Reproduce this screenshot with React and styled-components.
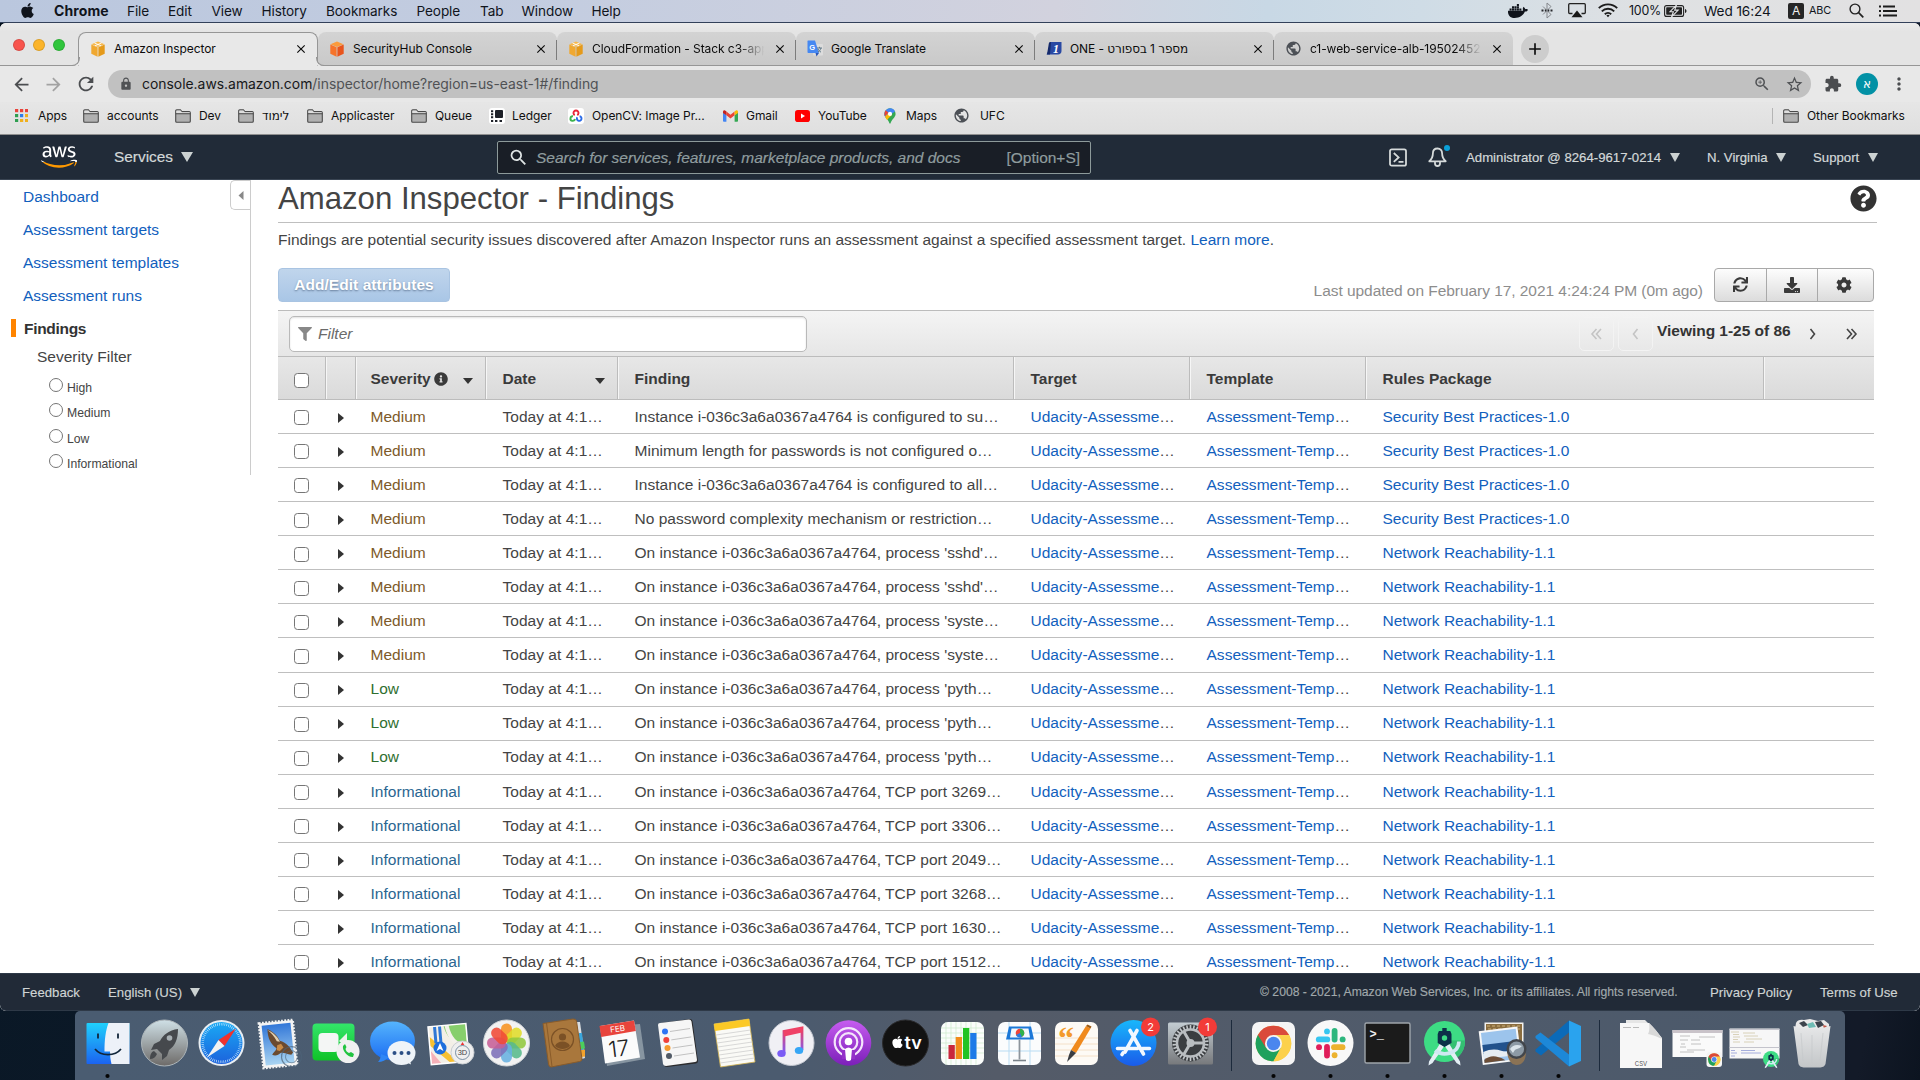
import React from "react";
import styled, { createGlobalStyle, css } from "styled-components";
import { FaApple, FaDocker, FaAws, FaSync, FaDownload, FaCog, FaQuestionCircle, FaInfoCircle, FaFilter } from "react-icons/fa";
import {
  MdLock, MdExtension, MdStarBorder, MdZoomIn, MdArrowBack, MdArrowForward, MdRefresh,
  MdMoreVert, MdPublic, MdClose, MdAdd, MdSearch,
} from "react-icons/md";

const GlobalStyle = createGlobalStyle`
  * { box-sizing: border-box; }
  html, body { margin: 0; padding: 0; overflow: hidden; }
  svg { display: block; flex: none; }
`;

const ui = `Inter, "DejaVu Sans", sans-serif`;
const helv = `"Liberation Sans", Arial, sans-serif`;

const Desktop = styled.div`
  width: 1920px;
  height: 1080px;
  overflow: hidden;
  display: flex;
  flex-direction: column;
  background: linear-gradient(100deg, #04101c 0%, #0a1826 6%, #101c2c 50%, #131a28 97%, #0c1420 100%);
  font-family: ${helv};
  color: #444;
`;

/* ---------- shared ---------- */
const Slot = styled.div`
  flex: 0 0 ${(p) => p.$w}px;
  display: flex;
  align-items: center;
  white-space: nowrap;
`;
const Spacer = styled.div`
  flex: 1;
`;
const Caret = styled.span`
  flex: none;
  width: 0;
  height: 0;
  margin-left: ${(p) => p.$gap || 8}px;
  border-left: ${(p) => p.$s || 5}px solid transparent;
  border-right: ${(p) => p.$s || 5}px solid transparent;
  border-top: ${(p) => p.$h || 9}px solid ${(p) => p.$c || "#ccd2d2"};
`;

/* ---------- mac menu bar ---------- */
const MenuBar = styled.div`
  flex: 0 0 23px;
  display: flex;
  align-items: center;
  padding: 0 23px 1px 19px;
  border-bottom: 1px solid #33415a;
  background: linear-gradient(90deg, #bac7de 0%, #c4cde0 30%, #d2d2de 55%, #c8d8e5 66%, #cfdce6 74%, #dfe1e3 86%, #e2e1e2 100%);
  font: 400 13.6px ${ui};
  letter-spacing: -0.1px;
  color: #10141c;
`;
const AppName = styled.span`
  font-size: 14px;
  font-weight: 700;
  letter-spacing: 0.1px;
`;
const Small = styled.span`
  font-size: 12.4px;
  letter-spacing: -0.2px;
`;
const Tiny = styled.span`
  font-size: 10.8px;
`;
const InputBadge = styled.span`
  width: 16px;
  height: 16px;
  border-radius: 2px;
  background: #262626;
  color: #eee;
  font-size: 12px;
  line-height: 16px;
  text-align: center;
`;

/* ---------- browser ---------- */
const Browser = styled.div`
  flex: 0 0 988px;
  display: flex;
  flex-direction: column;
  border-radius: 6px;
  overflow: hidden;
  background: #fff;
`;
const TabStrip = styled.div`
  flex: 0 0 43px;
  display: flex;
  align-items: flex-end;
  background: linear-gradient(#ececec, #e4e4e4 20%);
  border-bottom: 1px solid #969696;
  font: 400 12px ${ui};
  letter-spacing: -0.08px;
  color: #0c0c0c;
`;
const Lights = styled.div`
  flex: 0 0 78px;
  align-self: center;
  display: flex;
  gap: 8px;
  padding: 2px 0 0 13px;
`;
const Light = styled.span`
  width: 12px;
  height: 12px;
  border-radius: 50%;
  background: ${(p) => p.$c};
  border: 1px solid rgba(0, 0, 0, 0.12);
`;
const Tab = styled.div`
  position: relative;
  flex: 0 0 239px;
  min-width: 0;
  height: 33px;
  display: flex;
  align-items: center;
  padding: 0 9px 0 11px;
  border-radius: 8px 8px 0 0;
  background: linear-gradient(#d3d3d3, #c9c9c9);
  ${(p) =>
    p.$active &&
    css`
      flex-basis: 240px;
      height: 34px;
      margin-bottom: -1px;
      background: #e8e8e8;
      border: 1px solid #969696;
      border-bottom: 0;
      padding: 0 9px 2px 11px;
      z-index: 1;
      &::before,
      &::after {
        content: "";
        position: absolute;
        bottom: 0;
        width: 8px;
        height: 8px;
        border-bottom: 1px solid #969696;
      }
      &::before {
        left: -8px;
        border-right: 1px solid #969696;
        border-bottom-right-radius: 8px;
        box-shadow: 2px 1px 0 #e8e8e8;
      }
      &::after {
        right: -8px;
        border-left: 1px solid #969696;
        border-bottom-left-radius: 8px;
        box-shadow: -2px 1px 0 #e8e8e8;
      }
    `}
`;
const TabRule = styled.span`
  position: absolute;
  right: 0;
  top: 8px;
  width: 1px;
  height: 20px;
  background: #7c7c7c;
`;
const TabTitle = styled.span`
  flex: 1 1 0;
  min-width: 0;
  margin: 0 5px 0 8px;
  overflow: hidden;
  white-space: nowrap;
  ${(p) => p.$fade && css`mask-image: linear-gradient(90deg, #000 83%, transparent 98%);`}
`;
const NewTab = styled.div`
  width: 28px;
  height: 28px;
  margin: 0 0 2px 8px;
  border-radius: 50%;
  background: #cdcdcd;
  display: flex;
  align-items: center;
  justify-content: center;
`;
const Toolbar = styled.div`
  flex: 0 0 36px;
  display: flex;
  align-items: center;
  padding: 0 10px 0 11px;
  background: #e8e8e8;
  color: #4b4d50;
`;
const Omnibox = styled.div`
  flex: 0 0 1703px;
  height: 28px;
  border-radius: 14px;
  background: #c1c1c1;
  display: flex;
  align-items: center;
  padding: 0 7px 0 11px;
  font: 400 13.9px ${ui};
  letter-spacing: 0;
  color: #505255;
`;
const Host = styled.span`
  color: #17181a;
`;
const Url = styled.span`
  margin-left: 9px;
  white-space: nowrap;
`;
const Avatar = styled.span`
  width: 22px;
  height: 22px;
  border-radius: 50%;
  background: #0291a5;
  color: #fff;
  font: 12px/22px "DejaVu Sans", sans-serif;
  text-align: center;
`;
const Bookmarks = styled.div`
  flex: 0 0 33px;
  display: flex;
  align-items: center;
  padding: 0 0 5px 15px;
  background: linear-gradient(#e6e6e6, #dfdfdf);
  border-bottom: 1px solid #8f8f8f;
  font: 400 12px ${ui};
  letter-spacing: -0.06px;
  color: #101010;
`;
const BmIcon = styled.span`
  flex: 0 0 ${(p) => p.$w}px;
  display: flex;
`;
const BmRule = styled.span`
  width: 1px;
  height: 16px;
  margin-right: 10px;
  background: #b4b4b4;
`;

/* ---------- aws nav ---------- */
const Nav = styled.div`
  flex: 0 0 45px;
  display: flex;
  align-items: center;
  padding-left: 41px;
  background: #212b38;
  border-bottom: 1px solid #3a4553;
  color: #d3d8d8;
  font-size: 13.2px;
  -webkit-text-stroke: 0.2px;
`;
const Services = styled.div`
  flex: 0 0 383px;
  display: flex;
  align-items: center;
  font-size: 15.4px;
`;
const NavSearch = styled.div`
  flex: 0 0 594px;
  height: 33px;
  display: flex;
  align-items: center;
  padding: 1px 10px 0 10px;
  border: 1px solid #8d9a9a;
  border-radius: 2px;
  background: #191e26;
  color: #8f9c9e;
  font-size: 15.5px;
  letter-spacing: -0.02px;
  i { flex: 1; margin-left: 7px; }
`;
const BellWrap = styled.span`
  position: relative;
`;
const Dot = styled.span`
  position: absolute;
  right: -3px;
  top: -2px;
  width: 6px;
  height: 6px;
  border-radius: 50%;
  background: #0aa0d8;
`;

/* ---------- page ---------- */
const Page = styled.div`
  flex: 1;
  min-height: 0;
  display: flex;
  overflow: hidden;
  font-size: 15.5px;
`;
const Side = styled.div`
  flex: 0 0 251px;
  height: 295px;
  display: flex;
  border-right: 1px solid #ccc;
`;
const SideNav = styled.div`
  flex: 1;
  display: flex;
  flex-direction: column;
  padding-left: 11px;
  > * { flex: none; }
`;
const SideLink = styled.a`
  height: 33px;
  line-height: 33px;
  padding-left: 12px;
  color: #1160bd;
`;
const SideCurrent = styled.div`
  height: 18px;
  line-height: 19px;
  margin-top: 7px;
  padding-left: 8px;
  border-left: 5px solid #ff8400;
  font-weight: 700;
  letter-spacing: -0.3px;
  color: #333;
`;
const SideSub = styled.div`
  height: 35px;
  line-height: 40px;
  padding-left: 26px;
`;
const Choice = styled.div`
  height: 25.5px;
  display: flex;
  align-items: center;
  padding-left: 38px;
  font-size: 12.2px;
  span { margin: 6px 0 0 4px; }
`;
const Radio = styled.i`
  width: 14px;
  height: 14px;
  border: 1px solid #757575;
  border-radius: 50%;
`;
const Collapse = styled.div`
  width: 20px;
  height: 30px;
  border: 1px solid #ccc;
  border-right: 0;
  border-radius: 5px 0 0 5px;
  display: flex;
  align-items: center;
  justify-content: center;
`;
const Main = styled.div`
  flex: 0 0 1599px;
  margin-left: 27px;
  display: flex;
  flex-direction: column;
  > * { flex-shrink: 0; }
`;
const TitleRow = styled.div`
  height: 43px;
  display: flex;
  justify-content: space-between;
  align-items: flex-start;
  border-bottom: 1px solid #bfbfbf;
  color: #333;
`;
const Title = styled.h1`
  margin: 0;
  font-weight: 400;
  font-size: 31.15px;
  line-height: 37px;
  color: #444;
`;
const Desc = styled.div`
  height: 45px;
  line-height: 34px;
  a { color: #1160bd; }
`;
const Actions = styled.div`
  width: 1596px;
  height: 33px;
  display: flex;
  align-items: center;
`;
const Primary = styled.div`
  width: 172px;
  height: 34px;
  line-height: 31px;
  text-align: center;
  border: 1px solid #a9c4e2;
  border-radius: 4px;
  background: linear-gradient(#c0d5ec, #a9c6e6);
  color: #fff;
  font-weight: 700;
  letter-spacing: 0.05px;
  text-shadow: 0 1px 2px rgba(40, 60, 90, 0.55);
`;
const Updated = styled.div`
  margin: 12px 11px 0 auto;
  letter-spacing: -0.05px;
  color: #8d8d8d;
`;
const Group = styled.div`
  display: flex;
  width: 160px;
  height: 34px;
  border: 1px solid #a9a9a9;
  border-radius: 4px;
  background: linear-gradient(#fdfdfd, #dcdcdc);
  color: #3a3a3a;
`;
const GroupBtn = styled.div`
  flex: 0 0 ${(p) => p.$w}px;
  display: flex;
  align-items: center;
  justify-content: center;
  & + & { border-left: 1px solid #a9a9a9; }
  &:last-child { padding-right: 3px; }
`;
const FilterBar = styled.div`
  width: 1596px;
  height: 47px;
  margin-top: 9px;
  padding: 0 1px 0 11px;
  display: flex;
  align-items: center;
  border-top: 1px solid #bcbcbc;
  border-bottom: 1px solid #bcbcbc;
  background: linear-gradient(#f4f4f4, #e6e6e6);
`;
const FilterBox = styled.div`
  width: 518px;
  height: 36px;
  display: flex;
  align-items: center;
  gap: 6px;
  padding-left: 8px;
  border: 1px solid #b9b9b9;
  border-radius: 5px;
  background: #fff;
  box-shadow: inset 0 1px 2px rgba(0, 0, 0, 0.12);
  color: #6a6a6a;
`;
const Pager = styled.div`
  width: 35px;
  height: 34px;
  margin-right: 4px;
  border: 1px solid ${(p) => (p.$off ? "#f3f3f3" : "transparent")};
  border-radius: 5px;
  display: flex;
  align-items: center;
  justify-content: center;
  color: ${(p) => (p.$off ? "#c4c4c4" : "#444")};
`;
const Viewing = styled.b`
  width: 138px;
  margin-bottom: 5px;
  letter-spacing: -0.03px;
  color: #333;
  white-space: nowrap;
`;
const grid = css`
  display: grid;
  width: 1596px;
  grid-template-columns: 48px 28px 132px 132px 396px 176px 176px 398px 110px;
`;
const Head = styled.div`
  ${grid}
  height: 43px;
  border-bottom: 1px solid #bcbcbc;
  background: linear-gradient(#e7e7e7, #dadada);
  font-weight: 700;
  letter-spacing: -0.02px;
  color: #3a3a3a;
`;
const HeadCell = styled.div`
  display: flex;
  align-items: center;
  padding: 2px 12px 0 16.5px;
  border-right: 1px solid ${(p) => (p.$last ? "transparent" : "#bcbcbc")};
  box-shadow: ${(p) => (p.$last ? "none" : "1px 0 0 #f6f6f6")};
  svg { margin: -1px 0 0 3px; }
`;
const Sort = styled.span`
  margin: 3px 0 0 auto;
  border-left: 5.5px solid transparent;
  border-right: 5.5px solid transparent;
  border-top: 6px solid #333;
`;
const Row = styled.div`
  ${grid}
  flex: 0 0 34.07px;
  border-bottom: 1px solid #bfbfbf;
  letter-spacing: 0.03px;
`;
const Cell = styled.div`
  display: flex;
  align-items: center;
  padding: 0.6px 0 0 16.5px;
  white-space: nowrap;
  color: ${(p) => p.$c || "#444"};
`;
const Link = styled.a`
  color: #1160bd;
`;
const Check = styled.i`
  width: 15px;
  height: 15px;
  margin: 2px 0 0 -0.5px;
  border: 1px solid #767676;
  border-radius: 3.5px;
  background: #fff;
`;
const Expand = styled.i`
  margin: 2px 0 0 -4.5px;
  border-top: 5px solid transparent;
  border-bottom: 5px solid transparent;
  border-left: 6px solid #333;
`;
const Foot = styled.div`
  flex: 0 0 38px;
  display: flex;
  align-items: center;
  padding: 0 0 0 22px;
  background: #212a37;
  border: 1px solid #2e3947;
  border-width: 1px 0;
  border-radius: 0 0 6px 6px;
  color: #cfd4d4;
  font-size: 13.2px;
  -webkit-text-stroke: 0.15px;
`;
const Legal = styled.span`
  font-size: 12.2px;
  color: #a0a8ab;
`;

/* ---------- dock ---------- */
const DockWrap = styled.div`
  flex: 0 0 69px;
  padding-left: 75px;
`;
const Dock = styled.div`
  width: 1770px;
  height: 69px;
  padding-left: 3.5px;
  display: flex;
  border-radius: 5px 5px 0 0;
  background: linear-gradient(90deg, #4a5c71 0%, #4b5b6f 40%, #545b68 52%, #505b6b 75%, #4b596b 100%);
`;
const DockCell = styled.div`
  flex: 0 0 57.05px;
  height: 69px;
`;
const DockRule = styled.div`
  flex: 0 0 25.3px;
  padding: 9px 0 0 12px;
  &::after { content: ""; display: block; width: 1px; height: 51px; background: #1c2a3c; }
`;

/* ---------- icons ---------- */
const Folder = () => (
  <svg width="16" height="14" viewBox="0 0 16 14" fill="#b0b0b0" stroke="#4a4a4a" strokeWidth="1.1">
    <path d="M.7 12.2V2c0-.7.4-1.1 1-1.1h3.700l1.500 1.700h7.300c.700 0 1.100.4 1.100 1.100v8.500c0 .7-.4 1-1.100 1H1.700c-.6 0-1-.3-1-1z" />
    <path d="M1.300 2v2.200h13.400V3.200H7L5.400 1.500H1.700z" fill="#dedede" stroke="none" />
    <path d="M.7 4.700h14.600" />
  </svg>
);
const Cube = ({ l, r, t, band }) => (
  <svg width="16" height="16" viewBox="0 0 16 16">
    <path d="M8 .5l6.500 2.700L8 6 1.500 3.200z" fill={t} />
    <path d="M1.300 3.600L7.600 6.200v9.500l-6.300-2.900z" fill={l} />
    <path d="M14.700 3.600L8.400 6.200v9.500l6.300-2.900z" fill={r} />
    {band && <path d="M4.500 2l6.600 2.800M11.500 2L4.900 4.800" stroke="#fff" strokeWidth=".9" />}
  </svg>
);
const TranslateIcon = () => (
  <svg width="16" height="17" viewBox="0 0 16 17">
    <rect x="6" y="4" width="10" height="11.500" rx="1" fill="#dcdcdc" />
    <path d="M1 .5h7l4 12.500H1.600c-.6 0-1.100-.4-1.100-1V1.500C.5.900.7.5 1 .5z" fill="#4688f1" />
    <path d="M8.500 13h3.500l-2.500 3.500z" fill="#2b57b8" />
    <path d="M10 8h5M12.500 6.800V8M14 8c-.6 2-1.500 3-3 4M11 9c.6 1.400 1.600 2.400 3 3.200" stroke="#607988" fill="none" />
    <text x="2.200" y="9.500" fontSize="7.500" fontWeight="700" fontFamily="Liberation Sans" fill="#fff">G</text>
  </svg>
);
const OneIcon = () => (
  <svg width="16" height="15" viewBox="0 0 16 15">
    <path d="M4 1h11.500v9c0 2-1.500 3.500-3.500 3.500H.5l2-4z" fill="#2949a3" />
    <path d="M1 13.500l2-12 2-.5-1 12.500z" fill="#152a6b" />
    <text x="7" y="12" fontSize="12" fontStyle="italic" fontWeight="700" fontFamily="Liberation Serif" fill="#fff">1</text>
  </svg>
);
const AppsIcon = () => (
  <svg width="13" height="13" viewBox="0 0 13 13">
    {["#e8433a", "#e8433a", "#e8433a", "#2e9e50", "#2f7de9", "#f0b01e", "#2e9e50", "#f0b01e", "#f0b01e"].map((c, i) => (
      <rect key={i} x={(i % 3) * 5} y={Math.floor(i / 3) * 5} width="3.200" height="3.200" fill={c} />
    ))}
  </svg>
);
const LedgerIcon = () => (
  <svg width="16" height="16" viewBox="0 0 16 16">
    <rect width="16" height="16" rx="3" fill="#fff" />
    <rect x="6" y="2" width="8" height="8" rx="1" fill="#1d2028" />
    <path d="M2 3.200h2.200M2 6.300h2.200M2 9.300h2.200" stroke="#1d2028" strokeWidth="1.900" />
    <path d="M2 13h2.200M6 13h2.400M10.500 13H13" stroke="#1d2028" strokeWidth="2" />
  </svg>
);
const CvIcon = () => (
  <svg width="16" height="16" viewBox="0 0 16 16" fill="none" strokeWidth="1.900">
    <rect width="16" height="16" rx="3" fill="#fff" />
    <path d="M6.700 7.200A2.500 2.500 0 1 1 9.300 7.200" stroke="#e8283a" />
    <path d="M5 8.300A2.300 2.300 0 1 0 7 11" stroke="#3fb34f" />
    <path d="M9.300 9.300a2.300 2.300 0 1 0 2.300-1" stroke="#2a6be8" />
  </svg>
);
const GmailIcon = () => (
  <svg width="15" height="12" viewBox="0 0 15 12">
    <path d="M0 2v9c0 .5.4.8.800.800h2.600V5z" fill="#4285f4" />
    <path d="M15 2v9c0 .5-.4.8-.8.800h-2.600V5z" fill="#34a853" />
    <path d="M3.400 1.500L7.500 4.700l4.100-3.200v3.800L7.500 8.400 3.400 5.300z" fill="#ea4335" />
    <path d="M0 2C0 .4 1.500-.3 2.800.9l.6.600v3.800L0 2.900z" fill="#c5221f" />
    <path d="M15 2c0-1.600-1.500-2.300-2.800-1.100l-.6.600v3.800L15 2.900z" fill="#fbbc04" />
  </svg>
);
const YtIcon = () => (
  <svg width="15" height="12" viewBox="0 0 15 12">
    <rect width="15" height="12" rx="2.800" fill="#f00" />
    <path d="M6 3.500v5L10 6z" fill="#fff" />
  </svg>
);
const PinIcon = () => (
  <svg width="12" height="16" viewBox="0 0 12 16">
    <path d="M6 .3a5.600 5.600 0 0 1 5.600 5.600c0 3.600-4.100 5-5.100 9.600h-1C4.500 10.900.4 9.500.4 5.900A5.600 5.600 0 0 1 6 .3z" fill="#34a853" />
    <path d="M6 .3a5.600 5.600 0 0 1 5 3.100L2 9.800C1.100 8.700.4 7.600.4 5.900A5.600 5.600 0 0 1 6 .3z" fill="#4285f4" />
    <path d="M1.700 2.300L4.500 4.700.9 8.300C.1 6.500.3 4 1.700 2.300z" fill="#ea4335" />
    <path d="M7.500 7.300L3 12 1 8.800 4.500 5z" fill="#fbbc04" />
    <circle cx="6" cy="5.900" r="2.100" fill="#fff" />
  </svg>
);
const Bluetooth = () => (
  <svg width="12" height="17" viewBox="0 0 12 17" fill="none" stroke="#85888d">
    <path d="M2 4.500l8 8-4 3.500V1l4 3.500-8 8" />
    <path d="M.5 8.500h2M3.800 8.500h1.500M6.800 8.500h1.500M9.500 8.500h2" stroke="#26282c" strokeWidth="2" />
  </svg>
);
const AirPlay = () => (
  <svg width="18" height="15" viewBox="0 0 18 15">
    <path d="M4.500 10.500H1.700c-.6 0-1-.4-1-1V1.700c0-.6.4-1 1-1h14.600c.6 0 1 .4 1 1v7.800c0 .6-.4 1-1 1h-2.800" fill="none" stroke="#222" strokeWidth="1.300" />
    <path d="M9 7.500l5.500 6.800h-11z" fill="#181818" />
  </svg>
);
const Wifi = () => (
  <svg width="20" height="15" viewBox="0 0 20 15" fill="none" stroke="#1c1c1c" strokeWidth="1.900">
    <path d="M.8 5.200a13 13 0 0 1 18.400 0M3.800 8.300a8.800 8.800 0 0 1 12.400 0M6.800 11.200a4.600 4.600 0 0 1 6.400 0" />
    <path d="M8.400 12.600a2.300 2.300 0 0 1 3.200 0L10 14.300z" fill="#1c1c1c" stroke="none" />
  </svg>
);
const Battery = () => (
  <svg width="23" height="12" viewBox="0 0 23 12">
    <rect x=".6" y=".6" width="19" height="10.800" rx="2" fill="none" stroke="#222" strokeWidth="1.100" />
    <rect x="2.200" y="2.200" width="15.800" height="7.600" rx=".8" fill="#222" />
    <path d="M21 4v4c.9-.3 1.500-1 1.500-2s-.6-1.700-1.500-2z" fill="#222" />
    <path d="M12.500 0L6 6.700h3.400L7.500 12l6.700-6.900h-3.500z" fill="#222" stroke="#e0e2e4" strokeWidth="1.100" />
  </svg>
);
const Loupe = () => (
  <svg width="15" height="15" viewBox="0 0 15 15" fill="none" stroke="#222" strokeWidth="1.400">
    <circle cx="6" cy="6" r="4.900" />
    <path d="M9.600 9.600l4.700 4.700" strokeWidth="1.700" />
  </svg>
);
const ListIcon = () => (
  <svg width="18" height="12" viewBox="0 0 18 12" stroke="#1c1c1c" strokeWidth="1.800">
    <path d="M0 1.500h2M4 1.500h12M0 6h2M4 6h14M0 10.500h2M4 10.500h14" />
  </svg>
);
const AwsLogo = () => (
  <>
    <svg width="0" height="0">
      <defs>
        <linearGradient id="awsFill" gradientUnits="userSpaceOnUse" x1="0" y1="0" x2="0" y2="512">
          <stop offset=".672" stopColor="#fff" />
          <stop offset=".672" stopColor="#ff9900" />
        </linearGradient>
      </defs>
    </svg>
    <FaAws size={36} fill="url(#awsFill)" />
  </>
);
const CloudShell = () => (
  <svg width="18" height="19" viewBox="0 0 18 19" fill="none" stroke="#d5dada" strokeWidth="1.800">
    <rect x="1" y="1.300" width="16" height="16.400" rx="1.800" />
    <path d="M4.800 5l4.800 4.400-4.800 4.400M9.500 13.800h5" />
  </svg>
);
const Bell = () => (
  <svg width="19" height="20" viewBox="0 0 19 20" fill="none" stroke="#d5dada" strokeWidth="1.800">
    <path d="M9.500 1.500c-3 0-4.600 2-4.600 4.800 0 4-1.200 6-3.600 8h16.400c-2.400-2-3.600-4-3.600-8 0-2.800-1.600-4.800-4.600-4.800z" strokeLinejoin="round" />
    <path d="M7 15v1.500a2.500 2.500 0 0 0 5 0V15" />
  </svg>
);
const Chev = ({ dir, dbl }) => (
  <svg width="13" height="14" viewBox="0 0 13 14" fill="none" stroke="currentColor" strokeWidth="1.600" transform={dir === "r" ? "scale(-1 1)" : undefined}>
    {dbl ? <path d="M6.500 2L2 7l4.500 5M11 2L6.500 7l4.500 5" /> : <path d="M8.500 2L4.500 7l4 5" />}
  </svg>
);

const Gears = ({ n, r, w, h, c }) =>
  Array.from({ length: n }, (_, i) => (
    <rect key={i} x={28.5 - w / 2} y={32 - r} width={w} height={h} fill={c} transform={`rotate(${(360 / n) * i} 28.5 32)`} />
  ));
const ChromeMark = ({ x, y, r }) => (
  <g transform={`translate(${x} ${y}) scale(${r / 18})`}>
    <circle r="18" fill="#fcd14b" />
    <path d="M0 0L-15.600-9A18 18 0 0 0 0 18L7.800 4.500z" fill="#1fa15d" />
    <path d="M0-8.500H15.800A18 18 0 0 1 0 18L7.400 4z" fill="#fcd14b" />
    <path d="M-15.800-8.600L-7.500 4.500 0 -8.500H15.800A18 18 0 0 0 -15.800-8.600z" fill="#da4a3b" />
    <circle r="8.600" fill="#f4f4f4" />
    <circle r="6.800" fill="#4a86ee" />
  </g>
);
const StudioMark = ({ x, y, r }) => (
  <g transform={`translate(${x} ${y}) scale(${r / 20.5})`}>
    <circle r="20.500" fill="#3ddc84" />
    <path d="M0-1h20.400A20.500 20.500 0 0 1 12 16.500z" fill="#34c072" />
    <path d="M-4.500 2L-15.500 20l-.5 4 4-2.500L-.5 5zM4.500 2l11 18 .5 4-4-2.500L.5 5z" fill="#e3eef4" />
    <path d="M-9.500 9C-2 15 14 13 14.500 0" stroke="#cfe9f2" strokeWidth="3.800" fill="none" />
    <path d="M-2.200-13.500h4.400v3h3.600l1.200 3v9L0 5.500-6.800 1.500v-9l1.200-3h3.400z" fill="#0d3049" />
    <circle cy="-3.500" r="2.700" fill="#3ddc84" />
  </g>
);
const Badge = ({ n }) => (
  <g>
    <circle cx="45.500" cy="16" r="9.500" fill="#f23b38" />
    <text x="45.500" y="19.800" fontSize="11" textAnchor="middle" fontFamily="Inter" fill="#fff">{n}</text>
  </g>
);

const dockArt = {
  finder: (
    <>
      <rect x="7.500" y="12" width="43" height="41" rx="1" fill="url(#gFinder)" />
      <path d="M29.500 12h21v41H32.500c-1-4-1.500-8-1.500-12.500h-5.500C25.500 29 26.500 20 29.500 12z" fill="#edf1f8" />
      <path d="M19 22.500v5M39 22.500v5" stroke="#12263a" strokeWidth="1.800" />
      <path d="M16 38c6 7.500 20 7.500 26 0" stroke="#12263a" strokeWidth="1.700" fill="none" />
    </>
  ),
  launchpad: (
    <>
      <circle cx="28.500" cy="32" r="23" fill="url(#gLaunch)" stroke="#aeb6ba" />
      <path d="M42 18c-9 1-15 6-18 12l-6 3-3 6 6-1 5 5 0 6 5-4 2-6c6-4 9-11 9-21z" fill="#46494d" />
      <path d="M18 40c-3 1-4 4-4 8 3 0 6-2 7-5z" fill="#46494d" />
      <circle cx="33.500" cy="27" r="2.800" fill="#a8b0b4" />
    </>
  ),
  safari: (
    <>
      <circle cx="28.500" cy="32" r="23" fill="#e9eef2" />
      <circle cx="28.500" cy="32" r="21" fill="url(#gSafari)" />
      <circle cx="28.500" cy="32" r="18.800" fill="none" stroke="#d8f2ff" strokeWidth="2.600" strokeDasharray=".6 1.300" />
      <path d="M43 17.500L31.500 35l-6-6z" fill="#f0322d" />
      <path d="M14 46.500L25.500 29l6 6z" fill="#f2f2f2" />
    </>
  ),
  mail: (
    <g transform="rotate(-6 28.500 32)">
      <rect x="11" y="10.500" width="34" height="45" fill="#f3f3f3" stroke="#f3f3f3" strokeWidth="2.500" strokeDasharray="1.800 1.400" />
      <rect x="13.500" y="13" width="29" height="40" fill="url(#gMail)" />
      <path d="M19 17c3 2 9 6 11 13 3 1 6 3 9 7l3 6-2 2c-4-1-7-3-10-3-3 2-6 3-9 1 1-2 4-3 5-6-5-4-8-11-7-20z" fill="#6b4a2f" />
      <path d="M19 18c3 3 6 7 8 12l3 1c-2-6-6-10-11-13z" fill="#e0cfb0" />
      <path d="M27 34l4-1 2 4-4 3-3-1z" fill="#c98a45" />
      <circle cx="40" cy="47" r="10" fill="none" stroke="#4d6277" strokeWidth="1.200" opacity=".7" />
      <circle cx="40" cy="47" r="6" fill="none" stroke="#4d6277" opacity=".6" />
    </g>
  ),
  facetime: (
    <>
      <rect x="5.500" y="12.500" width="42" height="37" rx="4" fill="url(#gFace)" />
      <rect x="11.500" y="22" width="20" height="19" rx="4" fill="#f4f6f5" />
      <path d="M32 30l8-8v15z" fill="#e8f4ea" />
      <circle cx="41" cy="40.500" r="11.500" fill="#f1f1f1" />
      <path d="M36 35c-1 5 5 11.500 10 11l1-3-3-2-2 1c-2-1-3-2-3.500-4l1-2-1.500-3z" fill="#22c440" />
    </>
  ),
  messages: (
    <>
      <ellipse cx="28.500" cy="30" rx="22.500" ry="19.500" fill="url(#gMsg)" />
      <path d="M17 43c-.5 4-1 6-3 8 4 0 8-2 11-5z" fill="#2f86f5" />
      <ellipse cx="37.500" cy="42" rx="14" ry="12" fill="#eef3f8" />
      <path d="M40 50l7 3.500-1.500-6z" fill="#eef3f8" />
      <g fill="#2b4f86"><circle cx="30.500" cy="42" r="2" /><circle cx="37.500" cy="42" r="2" /><circle cx="44.500" cy="42" r="2" /></g>
    </>
  ),
  maps: (
    <>
      <g transform="rotate(-5 28.500 32)">
        <rect x="8.500" y="14" width="38" height="38" rx="1" fill="#f3efe6" />
        <path d="M24 14h22v20c-14 0-20-8-22-20z" fill="#87cf6c" />
        <path d="M27 14c2 14 8 22 19 22" stroke="#f4f1ea" strokeWidth="4" fill="none" />
        <path d="M9 24l26 27h-8L9 33z" fill="#f8c030" />
        <path d="M9 38l10 14H9z" fill="#f5b0b8" />
        <path d="M15 14v17M20 14v17" stroke="#2f78d6" strokeWidth="3" />
        <rect x="8.500" y="14" width="38" height="38" fill="none" stroke="#fff" strokeWidth="1.500" />
      </g>
      <circle cx="19" cy="37" r="6.500" fill="#1e6fdc" />
      <path d="M19 32l3.500 8-3.500-2-3.500 2z" fill="#fff" />
      <circle cx="41.500" cy="41.500" r="11.500" fill="#efefef" stroke="#c9cdd0" />
      <circle cx="41.500" cy="41.500" r="7" fill="none" stroke="#5d7894" strokeWidth=".8" />
      <path d="M41.500 31l1.800 3h-3.600z" fill="#e33" />
      <text x="41.500" y="44.300" fontSize="7.500" textAnchor="middle" fontFamily="Liberation Sans" fill="#444">3D</text>
    </>
  ),
  photos: (
    <>
      <circle cx="28.500" cy="32" r="23" fill="#f2f2f2" stroke="#cfd3d6" />
      {["#f79321", "#e0dc2a", "#92c83e", "#58b98b", "#68b0e0", "#7d70b8", "#c65f96", "#f04a35"].map((c, i) => (
        <rect key={i} x="23" y="12.500" width="11" height="19" rx="5.500" fill={c} opacity=".88" transform={`rotate(${i * 45} 28.500 32)`} />
      ))}
    </>
  ),
  contacts: (
    <>
      <path d="M41 11h4l5 36-6 2z" fill="#d9dde0" />
      <path d="M44 22l3 0 1 9-4 1zM45 32h3l1 8-4 1z" fill="#3aa6dd" />
      <path d="M45 31l4-.5 1 7-4 .5z" fill="#4ccf5c" />
      <path d="M46 39l4-.5 0 7-4 .5z" fill="#f3a32d" />
      <path d="M8 12.500L38 8q3 0 3.500 2L47 48q0 2-2.500 2.500L16 56q-2 0-2.500-3z" fill="#a9773c" stroke="#8a5c2a" />
      <path d="M11.500 12l5.500 43.500" stroke="#8a5c2a" />
      <circle cx="27.500" cy="28.500" r="11" fill="none" stroke="#7b5126" strokeWidth="1.200" />
      <circle cx="27.500" cy="26" r="3.600" fill="#7b5126" />
      <path d="M20 35c2-6 13-6 15 0-4 4-11 4-15 0z" fill="#7b5126" />
    </>
  ),
  calendar: (
    <>
      <path d="M10 16l38-3 5 35-38 7z" fill="#8795a1" />
      <path d="M8 15l34-5.500 6 37-35 6z" fill="#fbfbfb" />
      <path d="M7.500 15L42 9.500 43.800 20 9.200 26z" fill="#e8443c" />
      <text x="0" y="0" transform="translate(18.500 21.500) rotate(-7)" fontSize="8" fontFamily="Inter" fill="#fff">FEB</text>
      <text x="0" y="0" transform="translate(17.500 46.500) rotate(-7)" fontSize="22" fontWeight="300" fontFamily="Inter" fill="#222">17</text>
    </>
  ),
  reminders: (
    <>
      <path d="M10 14q0-2 2-2l29-4q2 0 2.500 2L49 50q0 2-2 2.500L18 56q-2.500 0-3-2z" fill="#2b2b2d" />
      <path d="M9 14q0-2 2-2l29-3.500q2 0 2.500 2L48 49q0 2-2 2L17 55q-2.500 0-3-2z" fill="#f6f6f6" />
      {[["#2f74f4", 16, 20.500], ["#f0413a", 17.300, 28.900], ["#f59a2d", 18.500, 37], ["#515a66", 20, 45]].map(([c, x, y]) => (
        <g key={c}><circle cx={x} cy={y} r="3" fill={c} /><path d={`M${x + 5} ${y}l20-3`} stroke="#aaa" strokeWidth=".7" /></g>
      ))}
    </>
  ),
  notes: (
    <>
      <path d="M8 13L43 8l6 43-34.500 5z" fill="#fafaf6" stroke="#d3b34c" strokeWidth=".8" />
      <path d="M8 13L43 8l1 7L9 20z" fill="#fbc926" />
      {[0, 1, 2, 3, 4, 5, 6, 7].map((i) => (
        <path key={i} d={`M${10 + i * 0.6} ${24 + i * 4}l34.500-5`} stroke="#c9c9c9" strokeWidth=".7" />
      ))}
    </>
  ),
  music: (
    <>
      <circle cx="28.500" cy="32" r="22.500" fill="#f0f0f5" stroke="#c6cad2" />
      <path d="M21 42V20.500l18-3.500v22" stroke="url(#gNote)" strokeWidth="2.800" fill="none" />
      <path d="M21 20l18-3.500v5L21 25.500z" fill="#ef4268" />
      <ellipse cx="18.500" cy="42.500" rx="4.200" ry="3.500" fill="#7a5cf5" />
      <ellipse cx="36" cy="39.500" rx="4.200" ry="3.500" fill="#36a6f5" />
    </>
  ),
  podcasts: (
    <>
      <circle cx="28.500" cy="32" r="22.800" fill="url(#gPod)" />
      <circle cx="28.500" cy="31" r="13.800" fill="none" stroke="#f4e6fb" strokeWidth="2.200" />
      <circle cx="28.500" cy="31" r="8.800" fill="none" stroke="#f4e6fb" strokeWidth="2.200" />
      <path d="M22 39h13v9H22z" fill="#9431c9" />
      <circle cx="28.500" cy="30.500" r="3.800" fill="#fff" />
      <path d="M25 38q3.500-3 7 0l-1 11q-2.500 2-5 0z" fill="#fff" />
    </>
  ),
  tv: (
    <>
      <circle cx="28.500" cy="32" r="23" fill="#121212" stroke="#2a2a2c" />
      <g transform="translate(13.500 24)"><FaApple size={14} color="#fff" /></g>
      <text x="27.500" y="37.500" fontSize="18" fontWeight="600" fontFamily="Inter" fill="#fff">tv</text>
    </>
  ),
  numbers: (
    <>
      <rect x="7" y="11" width="43" height="43" rx="7" fill="#fbfdfb" />
      <path d="M12 11v43M17 11v43M22 11v43M27 11v43M32 11v43M37 11v43M42 11v43M7 17h43M7 22h43M7 27h43M7 32h43M7 37h43M7 42h43" stroke="#cdeacb" strokeWidth=".7" />
      <rect x="14.500" y="34" width="6.300" height="14" fill="#c9283c" />
      <rect x="21.700" y="26" width="6.300" height="22" fill="#f28c1a" />
      <rect x="29" y="17" width="6.300" height="31" fill="#22c324" />
      <rect x="36.200" y="22" width="6.300" height="26" fill="#1d7be8" />
    </>
  ),
  keynote: (
    <>
      <rect x="7" y="11" width="43" height="43" rx="7" fill="#fbfcfd" />
      <path d="M7 22h43M7 40h43M18 11v43M39 11v43" stroke="#b9dcf3" strokeWidth="1" />
      <path d="M18 15.500h22l3 13H15z" fill="#1c78d8" />
      <path d="M20.500 17.500h17l1.500 9H19z" fill="#f3f8fc" />
      <circle cx="29" cy="22" r="4.300" fill="#f0453a" />
      <path d="M29 22v-4.300a4.300 4.300 0 0 1 0 8.600z" fill="#2fb24c" />
      <path d="M29 22l-4 2a4.300 4.300 0 0 0 6 2z" fill="#2a7de0" />
      <path d="M28.500 28.500v20" stroke="#8e959c" strokeWidth="1.800" />
      <path d="M22 49.500h13" stroke="#7b838a" strokeWidth="1.600" />
    </>
  ),
  pages: (
    <>
      <rect x="7" y="11" width="43" height="43" rx="7" fill="#fdfaf5" />
      <path d="M7 27h43M7 33h43M7 39h43M7 45h43" stroke="#f1d9bd" strokeWidth=".8" />
      <text x="10" y="38" fontSize="32" fontWeight="700" fontFamily="Liberation Serif" fill="#f39a2b">“</text>
      <path d="M38 15l4.500 2.500L28 42l-5-3z" fill="#f08a1d" />
      <path d="M38 15l1.500-1.500 4 2-1 2z" fill="#9c5a14" />
      <path d="M23 39l5 3-3 3-6 6 2-7z" fill="#3a3d42" />
    </>
  ),
  appstore: (
    <>
      <circle cx="28.500" cy="32" r="23" fill="url(#gStore)" />
      <path d="M32 19.500L20 41M25 19.500L38.500 43M12.500 37.500h20M37.500 37.500h7M18 42l-1 1.500" stroke="#f2f8ff" strokeWidth="3.600" strokeLinecap="round" />
      <Badge n="2" />
    </>
  ),
  prefs: (
    <>
      <rect x="6" y="11.500" width="45" height="42" rx="1.500" fill="url(#gPref)" />
      <circle cx="28.500" cy="32" r="18.500" fill="#3a3d40" />
      <Gears n={30} r={18} w={1.600} h={4} c="#c2c6c9" />
      <circle cx="28.500" cy="32" r="13.500" fill="none" stroke="#b9bdc0" strokeWidth="2.500" />
      <circle cx="28.500" cy="32" r="4" fill="#b9bdc0" />
      <path d="M28.500 32h14M28.500 32l-7-12M28.500 32l-7 12" stroke="#b9bdc0" strokeWidth="3" />
      <Badge n="1" />
    </>
  ),
  chrome: (
    <>
      <rect x="7" y="11" width="43" height="43" rx="7" fill="#f5f5f5" />
      <ChromeMark x={28.500} y={32.500} r={17.800} />
    </>
  ),
  slack: (
    <>
      <circle cx="28.500" cy="32" r="23" fill="#f8f8f8" />
      <g strokeWidth="5.800" strokeLinecap="round">
        <path d="M16.800 28.400h8.500" stroke="#36c5f0" /><path d="M25 20.300v.1" stroke="#36c5f0" />
        <path d="M32.600 20v8.500" stroke="#2eb67d" /><path d="M40.600 28.400h.1" stroke="#2eb67d" />
        <path d="M40.500 36.200H32" stroke="#ecb22e" /><path d="M32.600 44.200v.1" stroke="#ecb22e" />
        <path d="M25 44.500V36" stroke="#e01e5a" /><path d="M17 36.200h.1" stroke="#e01e5a" />
      </g>
    </>
  ),
  terminal: (
    <>
      <rect x="6" y="12" width="45" height="40" rx="1.500" fill="#1b1b1b" stroke="#9fa5ab" strokeWidth="1.400" />
      <text x="10.500" y="26.500" fontSize="12" fontWeight="700" fontFamily="Liberation Mono" fill="#f2f2f2">&gt;_</text>
    </>
  ),
  studio: <StudioMark x={28.500} y={30.500} r={20.500} />,
  preview: (
    <>
      <rect x="11.500" y="11.500" width="39" height="38" fill="#f4f2ee" />
      <rect x="13" y="13" width="36" height="35" fill="#8a6d3f" />
      <path d="M14 15h33M15 18h32" stroke="#b89a66" strokeWidth="1.500" strokeDasharray="3 2" />
      <g transform="rotate(-7 26 34)">
        <rect x="7.500" y="18" width="39" height="34" fill="#f7f7f7" />
        <rect x="9.500" y="20" width="35" height="30" fill="#9cc4ec" />
        <path d="M9.500 32h35v9h-35z" fill="#22528c" />
        <path d="M9.500 39q10-3 18 1t17-1v7h-35z" fill="#e6edf2" />
        <path d="M9.500 47q6-4 12-2t9 5h-21z" fill="#6d4f38" />
      </g>
      <path d="M34 40q1 13 9 14 10 0 10-14z" fill="#8b7355" />
      <circle cx="43.500" cy="38" r="8.800" fill="#8d9aa5" stroke="#42464c" strokeWidth="2.400" />
      <path d="M37 38q4-6 12-3-3 3-5 3t-4 4z" fill="#dbe4ea" />
    </>
  ),
  vscode: (
    <>
      <path d="M39 9.500L51 15v35L39 55.500z" fill="#2aa3ee" />
      <path d="M39 9.500v12L11 44.500l-5.500-4v-2z" fill="#0b6ab8" />
      <path d="M39 55.500V43.500L10.500 21.500l-5 3.500v2z" fill="#1d88d8" />
    </>
  ),
  csv: (
    <>
      <path d="M14 9h19l3 3h-22z" fill="#e6e6e6" />
      <path d="M8 12h29q6 6 13 15v30H8z" fill="#f7f7f7" />
      <path d="M37 12q1 8-1 11 6 1 14 5-6-10-13-16z" fill="#d9d9d9" />
      <path d="M11 16.500h8M21 16.500h6" stroke="#aaa" strokeWidth=".8" />
      <text x="29" y="54.500" fontSize="6" textAnchor="middle" fontFamily="Inter" fill="#555">CSV</text>
    </>
  ),
  win1: (
    <>
      <rect x="3.500" y="19" width="50" height="27" fill="#fafafa" />
      <rect x="3.500" y="19" width="50" height="3" fill="#c9c3c9" />
      <path d="M11 25h10M30 26h16M11 29h8M22 29h9M11 36h6M18 39h18M11 41h14M22 33h10M12 33h4" stroke="#bbb" strokeWidth=".9" />
      <rect x="37.500" y="41" width="15.500" height="15" rx="3" fill="#f5f5f5" />
      <ChromeMark x={45.200} y={48.500} r={6.300} />
    </>
  ),
  win2: (
    <>
      <rect x="3.500" y="17.500" width="50" height="30" fill="#f7f7f7" />
      <path d="M3.500 18.500h50M3.500 36.500h50" stroke="#c4c4cc" />
      <path d="M5 21h8M7 23.500h6M7 26h7M7 28.500h5M7 31h7M17 22h12M18 25h14M20 28h16M18 31h10" stroke="#d0c8a8" strokeWidth=".8" />
      <path d="M15 39.500h14M15 42h20M5 39.500h4M5 42h6M5 45h4" stroke="#8f9ad6" strokeWidth=".8" />
      <StudioMark x={45} y={48} r={8} />
    </>
  ),
  trash: (
    <>
      <path d="M13 12q2-4 8-3l6-1 8 2 6-1 5 4v5H12z" fill="#e9e9e9" />
      <path d="M16 12l5-2 4 4-5 2zM32 11l6-1 3 4-6 3z" fill="#3c434c" />
      <path d="M24 13l6-2 3 5-7 1z" fill="#6fbcb4" />
      <path d="M40 14l4 1-3 3z" fill="#c05544" />
      <path d="M10.500 15q18 6 37 0l-5 38q-1 3-5 3.500h-17q-4-.5-5-3.500z" fill="url(#gTrash)" />
      <path d="M18 22l2 28M29 24v28M40 22l-3 28" stroke="#c5c8ca" strokeWidth="1.200" opacity=".6" />
    </>
  ),
};

const grads = [
  ["gFinder", "#1fd0fc", "#1b63f0"], ["gLaunch", "#cfe0e6", "#6d6a68"], ["gSafari", "#1aa9f5", "#1c62dc"],
  ["gMail", "#3277d8", "#a9d4f2"], ["gFace", "#33e56a", "#10c228"], ["gMsg", "#55b4fd", "#1b6cf2"],
  ["gNote", "#f23f5f", "#7d5cf3"], ["gPod", "#c65cf0", "#7b1fb8"], ["gStore", "#18b7fb", "#1a5bea"],
  ["gPref", "#c3ccd2", "#77797c"], ["gTrash", "#e6e7e8", "#c3c6c8"],
];

const dockItems = [
  "finder*", "launchpad", "safari", "mail", "facetime", "messages", "maps", "photos", "contacts", "calendar",
  "reminders", "notes", "music", "podcasts", "tv", "numbers", "keynote", "pages", "appstore", "prefs", "|",
  "chrome*", "slack*", "terminal*", "studio*", "preview*", "vscode*", "|", "csv", "win1", "win2", "trash",
];

/* ---------- data ---------- */
const menus = [["File", 41], ["Edit", 43.5], ["View", 50], ["History", 64.5], ["Bookmarks", 90.5], ["People", 63.5], ["Tab", 41.5], ["Window", 70], ["Help", 40]];

const globe = <MdPublic size={17} color="#4c5056" />;
const tabs = [
  { t: "Amazon Inspector", i: <Cube l="#f0a830" r="#e59a1a" t="#f7b84a" band />, active: true },
  { t: "SecurityHub Console", i: <Cube l="#f6732a" r="#e8541c" t="#fb9a3c" />, rule: true },
  { t: "CloudFormation - Stack c3-app", i: <Cube l="#f0a830" r="#e59a1a" t="#f7b84a" band />, rule: true, fade: true },
  { t: "Google Translate", i: <TranslateIcon />, rule: true },
  { t: "ONE - מספר 1 בספורט", i: <OneIcon />, rule: true },
  { t: "c1-web-service-alb-195024527", i: globe, fade: true },
];

/* label, icon, icon slot width, distance to the next entry */
const marks = [
  ["Apps", <AppsIcon />, 23, 45], ["accounts", <Folder />, 24, 68], ["Dev", <Folder />, 24, 39],
  ["לימוד", <Folder />, 24, 45], ["Applicaster", <Folder />, 24, 80], ["Queue", <Folder />, 24, 54],
  ["Ledger", <LedgerIcon />, 23, 56], ["OpenCV: Image Pr...", <CvIcon />, 24, 131], ["Gmail", <GmailIcon />, 23, 49],
  ["YouTube", <YtIcon />, 23, 66], ["Maps", <PinIcon />, 22, 47], ["UFC", globe, 27, 40],
];

const M = "Medium", L = "Low", I = "Informational";
const sevColor = { [M]: "#7d5a29", [L]: "#2f6f2f", [I]: "#2a6591" };
const SBP = "Security Best Practices-1.0", NR = "Network Reachability-1.1";
const rows = [
  [M, "Instance i-036c3a6a0367a4764 is configured to su", SBP],
  [M, "Minimum length for passwords is not configured o", SBP],
  [M, "Instance i-036c3a6a0367a4764 is configured to all", SBP],
  [M, "No password complexity mechanism or restriction", SBP],
  ...["'sshd'", "'sshd'", "'syste", "'syste"].map((p) => [M, `On instance i-036c3a6a0367a4764, process ${p}`, NR]),
  ...["'pyth", "'pyth", "'pyth"].map((p) => [L, `On instance i-036c3a6a0367a4764, process ${p}`, NR]),
  ...["3269", "3306", "2049", "3268", "1630", "1512"].map((p) => [I, `On instance i-036c3a6a0367a4764, TCP port ${p}`, NR]),
];

export default function App() {
  return (
    <Desktop>
      <GlobalStyle />
      <svg width="0" height="0" style={{ position: "absolute" }}>
        <defs>
          {grads.map(([id, a, b]) => (
            <linearGradient key={id} id={id} x1="0" y1="0" x2="0" y2="1">
              <stop offset="0" stopColor={a} />
              <stop offset="1" stopColor={b} />
            </linearGradient>
          ))}
        </defs>
      </svg>

      <MenuBar>
        <Slot $w={35}><FaApple size={17} /></Slot>
        <Slot $w={73}><AppName>Chrome</AppName></Slot>
        {menus.map(([m, w]) => <Slot key={m} $w={w}>{m}</Slot>)}
        <Spacer />
        <Slot $w={33}><FaDocker size={20} /></Slot>
        <Slot $w={27}><Bluetooth /></Slot>
        <Slot $w={30}><AirPlay /></Slot>
        <Slot $w={31}><Wifi /></Slot>
        <Slot $w={35}><Small>100%</Small></Slot>
        <Slot $w={40}><Battery /></Slot>
        <Slot $w={84}>Wed 16:24</Slot>
        <Slot $w={21}><InputBadge>A</InputBadge></Slot>
        <Slot $w={40}><Tiny>ABC</Tiny></Slot>
        <Slot $w={30}><Loupe /></Slot>
        <ListIcon />
      </MenuBar>

      <Browser>
        <TabStrip>
          <Lights><Light $c="#f8544d" /><Light $c="#fbb42a" /><Light $c="#30c53c" /></Lights>
          {tabs.map((t) => (
            <Tab key={t.t} $active={t.active}>
              {t.i}
              <TabTitle $fade={t.fade}>{t.t}</TabTitle>
              <MdClose size={14} />
              {t.rule && <TabRule />}
            </Tab>
          ))}
          <NewTab><MdAdd size={20} /></NewTab>
        </TabStrip>
        <Toolbar>
          <Slot $w={32}><MdArrowBack size={21} /></Slot>
          <Slot $w={32}><MdArrowForward size={21} color="#a2a2a2" /></Slot>
          <Slot $w={33}><MdRefresh size={22} /></Slot>
          <Omnibox>
            <MdLock size={14} />
            <Url><Host>console.aws.amazon.com</Host>/inspector/home?region=us-east-1#/finding</Url>
            <Spacer />
            <Slot $w={32}><MdZoomIn size={18} /></Slot>
            <MdStarBorder size={19} />
          </Omnibox>
          <Slot $w={13} />
          <Slot $w={32}><MdExtension size={18} /></Slot>
          <Slot $w={33}><Avatar>א</Avatar></Slot>
          <MdMoreVert size={20} />
        </Toolbar>
        <Bookmarks>
          {marks.map(([t, icon, w, adv]) => (
            <Slot key={t} $w={w + adv}><BmIcon $w={w}>{icon}</BmIcon>{t}</Slot>
          ))}
          <Spacer />
          <BmRule />
          <Slot $w={137}><BmIcon $w={24}><Folder /></BmIcon>Other Bookmarks</Slot>
        </Bookmarks>

        <Nav>
          <Slot $w={73}><AwsLogo /></Slot>
          <Services>Services<Caret $s={6} $h={10} /></Services>
          <NavSearch>
            <MdSearch size={21} color="#dfe4e4" />
            <i>Search for services, features, marketplace products, and docs</i>
            [Option+S]
          </NavSearch>
          <Slot $w={298} />
          <Slot $w={39}><CloudShell /></Slot>
          <Slot $w={38}><BellWrap><Bell /><Dot /></BellWrap></Slot>
          <Slot $w={241}>Administrator @ 8264-9617-0214<Caret $gap={9} /></Slot>
          <Slot $w={106}>N. Virginia<Caret /></Slot>
          <Slot $w={90}>Support<Caret $gap={9} /></Slot>
        </Nav>

        <Page>
          <Side>
            <SideNav>
              <SideLink>Dashboard</SideLink>
              <SideLink>Assessment targets</SideLink>
              <SideLink>Assessment templates</SideLink>
              <SideLink>Assessment runs</SideLink>
              <SideCurrent>Findings</SideCurrent>
              <SideSub>Severity Filter</SideSub>
              {["High", "Medium", "Low", "Informational"].map((c) => (
                <Choice key={c}><Radio /><span>{c}</span></Choice>
              ))}
            </SideNav>
            <Collapse>
              <svg width="6" height="9" viewBox="0 0 6 9"><path d="M5.500 0v9L.5 4.500z" fill="#888" /></svg>
            </Collapse>
          </Side>
          <Main>
            <TitleRow>
              <Title>Amazon Inspector - Findings</Title>
              <svg width="27" height="37" viewBox="0 0 27 37"><g transform="translate(0 5)"><FaQuestionCircle size={27} /></g></svg>
            </TitleRow>
            <Desc>
              Findings are potential security issues discovered after Amazon Inspector runs an assessment against a specified assessment target. <a>Learn more</a>.
            </Desc>
            <Actions>
              <Primary>Add/Edit attributes</Primary>
              <Updated>Last updated on February 17, 2021 4:24:24 PM (0m ago)</Updated>
              <Group>
                <GroupBtn $w={51}><FaSync size={15} /></GroupBtn>
                <GroupBtn $w={51}><FaDownload size={16} /></GroupBtn>
                <GroupBtn $w={56}><FaCog size={16} /></GroupBtn>
              </Group>
            </Actions>
            <FilterBar>
              <FilterBox><FaFilter size={14} color="#888" /><i>Filter</i></FilterBox>
              <Spacer />
              <Pager $off><Chev dbl /></Pager>
              <Pager $off><Chev /></Pager>
              <Viewing>Viewing 1-25 of 86</Viewing>
              <Pager><Chev dir="r" /></Pager>
              <Pager><Chev dir="r" dbl /></Pager>
            </FilterBar>
            <Head>
              <HeadCell><Check /></HeadCell>
              <HeadCell />
              <HeadCell>Severity<FaInfoCircle size={14} /><Sort /></HeadCell>
              <HeadCell>Date<Sort /></HeadCell>
              <HeadCell>Finding</HeadCell>
              <HeadCell>Target</HeadCell>
              <HeadCell>Template</HeadCell>
              <HeadCell>Rules Package</HeadCell>
              <HeadCell $last />
            </Head>
            {rows.map(([sev, text, pkg], i) => (
              <Row key={i}>
                <Cell><Check /></Cell>
                <Cell><Expand /></Cell>
                <Cell $c={sevColor[sev]}>{sev}</Cell>
                <Cell>Today at 4:1…</Cell>
                <Cell>{text}…</Cell>
                <Cell><Link>Udacity-Assessme</Link>…</Cell>
                <Cell><Link>Assessment-Temp</Link>…</Cell>
                <Cell><Link>{pkg}</Link></Cell>
                <Cell />
              </Row>
            ))}
          </Main>
        </Page>

        <Foot>
          <Slot $w={86}>Feedback</Slot>
          <Slot $w={120}>English (US)<Caret /></Slot>
          <Spacer />
          <Slot $w={450}><Legal>© 2008 - 2021, Amazon Web Services, Inc. or its affiliates. All rights reserved.</Legal></Slot>
          <Slot $w={110}>Privacy Policy</Slot>
          <Slot $w={100}>Terms of Use</Slot>
        </Foot>
      </Browser>

      <DockWrap>
        <Dock>
          {dockItems.map((k, i) => {
            if (k === "|") return <DockRule key={i} />;
            const run = k.endsWith("*");
            return (
              <DockCell key={k}>
                <svg width="57" height="69" viewBox="0 0 57 69">
                  {dockArt[run ? k.slice(0, -1) : k]}
                  {run && <circle cx="28.500" cy="65" r="2.100" fill="#050505" />}
                </svg>
              </DockCell>
            );
          })}
        </Dock>
      </DockWrap>
    </Desktop>
  );
}
